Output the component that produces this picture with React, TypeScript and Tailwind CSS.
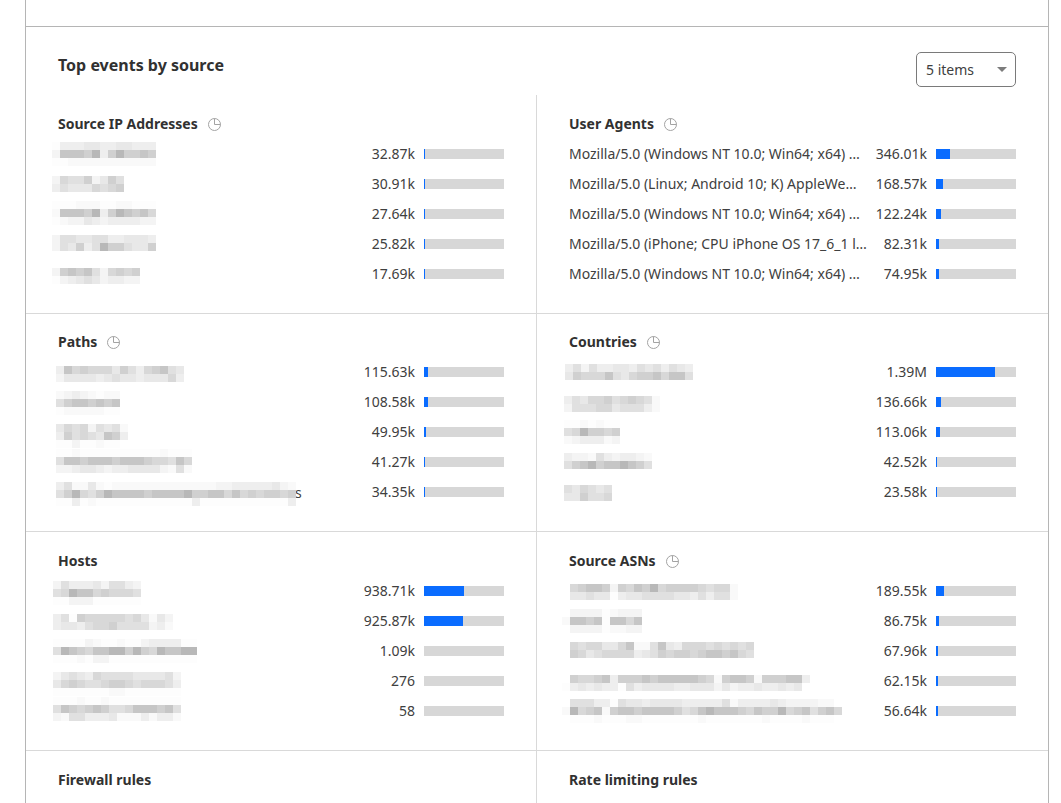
const shades: Record<string, string> = {
  "0": "#fdfdfd", "1": "#f9f9f9", "2": "#f4f4f4", "3": "#eeeeee", "4": "#e8e8e8",
  "5": "#e0e0e0", "6": "#d8d8d8", "7": "#d0d0d0", "8": "#c6c6c6", "9": "#b8b8b8",
};

type Blur = { x: number; y: number; rows: string[]; tail?: boolean };
type Item = { label?: string; blur?: Blur; value: string; fill: number };
type Sec = { title: string; pie?: boolean; top: string; items: Item[] };

function Mosaic({ x, y, rows, tail }: Blur) {
  const w = Math.max(...rows.map((r) => r.length)) * 8;
  return (
    <div className="relative h-full">
      {tail && <span className="absolute left-[237px] top-[1px] text-sm leading-5 text-[#404040]">s</span>}
      <svg
        width={w}
        height={rows.length * 8}
        className="relative block overflow-visible"
        style={{ marginLeft: x, marginTop: y }}
      >
        {rows.flatMap((r, ri) =>
          r.split("").map((c, ci) =>
            c === "." ? null : (
              <rect key={`${ri}-${ci}`} x={ci * 8} y={ri * 8} width={8} height={8} fill={shades[c]} />
            ),
          ),
        )}
      </svg>
    </div>
  );
}

function Pie() {
  return (
    <svg width="13" height="13" viewBox="0 0 13 13" fill="none" stroke="#a3a3a3" strokeWidth="1" className="ml-[10px] shrink-0">
      <circle cx="6.5" cy="6.5" r="6" />
      <path d="M6.5 .5v6h6" />
    </svg>
  );
}

function Row({ item }: { item: Item }) {
  return (
    <div className="flex h-[30px] items-center">
      <div className="h-full w-[299px] shrink-0">
        {item.blur ? (
          <Mosaic {...item.blur} />
        ) : (
          <div className="text-sm leading-[30px] whitespace-nowrap text-[#404040]">{item.label}</div>
        )}
      </div>
      <div className="flex-1 text-right text-sm leading-[30px] text-[#404040]">{item.value}</div>
      <div className="ml-[9px] h-2.5 w-20 shrink-0 bg-[#d7d7d7]">
        <div className="h-full bg-[#0a6cff]" style={{ width: item.fill }} />
      </div>
    </div>
  );
}

function Section({ sec }: { sec: Sec }) {
  return (
    <section className={`min-w-0 px-8 ${sec.top}`}>
      <h3 className="mb-[5px] flex h-5 items-center text-sm font-bold text-[#313131]">
        {sec.title}
        {sec.pie && <Pie />}
      </h3>
      {sec.items.map((item, i) => (
        <Row key={i} item={item} />
      ))}
    </section>
  );
}

const ua1 = "Mozilla/5.0 (Windows NT 10.0; Win64; x64) …";

const ips: Sec = {
  title: "Source IP Addresses", pie: true, top: "pt-[19px]",
  items: [
    { value: "32.87k", fill: 1, blur: { x: -6, y: 3, rows: ["0333443344333", "2888793797787", "0011111111111"] } },
    { value: "30.91k", fill: 1, blur: { x: -6, y: 7, rows: ["265572475", "354446567"] } },
    { value: "27.64k", fill: 1, blur: { x: -6, y: 2, rows: ["0001110011000", "1888793798786", "0122432333322"] } },
    { value: "25.82k", fill: 1, blur: { x: -6, y: 6, rows: ["2554455334443", "2547359775447"] } },
    { value: "17.69k", fill: 1, blur: { x: -6, y: 9, rows: ["27878526767", "02345423322"] } },
  ],
};
const agents: Sec = {
  title: "User Agents", pie: true, top: "pt-[19px]",
  items: [
    { value: "346.01k", fill: 14, label: ua1 },
    { value: "168.57k", fill: 7, label: "Mozilla/5.0 (Linux; Android 10; K) AppleWe…" },
    { value: "122.24k", fill: 5, label: ua1 },
    { value: "82.31k", fill: 3, label: "Mozilla/5.0 (iPhone; CPU iPhone OS 17_6_1 l…" },
    { value: "74.95k", fill: 3, label: ua1 },
  ],
};
const paths: Sec = {
  title: "Paths", pie: true, top: "pt-[18px]",
  items: [
    { value: "115.63k", fill: 4, blur: { x: -2, y: 9, rows: ["3867666475367854", "2444434544344463"] } },
    { value: "108.58k", fill: 4, blur: { x: -2, y: 4, rows: ["12321011", "57887878", "01111100"] } },
    { value: "49.95k", fill: 2, blur: { x: -2, y: 7, rows: ["465625451", "375654873", "00200100"] } },
    { value: "41.27k", fill: 1, blur: { x: -2, y: 2, rows: ["00100000000001000", "58878887888766586", "22344323344442151"] } },
    { value: "34.35k", fill: 1, blur: { x: -2, y: 5, tail: true, rows: ["351141011111111111112233333421", "579657988887888897788686767767", "003010000000000003000000000003"] } },
  ],
};
const countries: Sec = {
  title: "Countries", pie: true, top: "pt-[18px]",
  items: [
    { value: "1.39M", fill: 59, blur: { x: -4, y: 7, rows: ["3525334435453543", "4766685467786885"] } },
    { value: "136.66k", fill: 5, blur: { x: -5, y: 9, rows: ["354667567651", "255566455531"] } },
    { value: "113.06k", fill: 4, blur: { x: -5, y: 3, rows: ["0010100", "5697767", "1233312"] } },
    { value: "42.52k", fill: 1, blur: { x: -5, y: 6, rows: ["32215323321", "57897889875"] } },
    { value: "23.58k", fill: 1, blur: { x: -5, y: 8, rows: ["546545", "447556"] } },
  ],
};
const hosts: Sec = {
  title: "Hosts", pie: false, top: "pt-[19px]",
  items: [
    { value: "938.71k", fill: 40, blur: { x: -5, y: 5, rows: ["25333425532", "56988676665", "00222000000"] } },
    { value: "925.87k", fill: 39, blur: { x: -5, y: 8, rows: ["350766666564142", "344356675555231"] } },
    { value: "1.09k", fill: 0, blur: { x: -5, y: 3, rows: ["000021001002333300", "598768899797698899", "000102200000000000"] } },
    { value: "276", fill: 0, blur: { x: -5, y: 6, rows: ["2454365555444452", "4676556776566653", "0000000110000000"] } },
    { value: "58", fill: 0, blur: { x: -5, y: 1, rows: ["0001001000000000", "5876787556888785", "2155333411131331"] } },
  ],
};
const asns: Sec = {
  title: "Source ASNs", pie: true, top: "pt-[19px]",
  items: [
    { value: "189.55k", fill: 8, blur: { x: -7, y: 8, rows: [".678872768796777765661", ".445440344555544353551"] } },
    { value: "86.75k", fill: 3, blur: { x: -7, y: 3, rows: [".222201222", "1887808868", ".222201122"] } },
    { value: "67.96k", fill: 2, blur: { x: -7, y: 6, rows: [".65664468115843666565656", ".76456666345767767887865"] } },
    { value: "62.15k", fill: 2, blur: { x: -7, y: 9, rows: [".766783777878888876178871777883", "034343305344443344424233433434"] } },
    { value: "56.64k", fill: 2, blur: { x: -7, y: 3, rows: [".555330544344443333351333343222211", "19678178878888756898887687796785786", ".000100011000000010000000100001000"] } },
  ],
};

export default function App() {
  return (
    <div className="h-[803px] overflow-hidden bg-white pl-[25px] font-['Noto_Sans',sans-serif]">
      <div className="h-[803px] w-[1024px] border-x border-[#b5b5b5]">
        <div className="h-[27px] border-b border-[#b5b5b5]" />
        <div className="flex h-[68px] items-start justify-between px-8 pt-[25px]">
          <h2 className="mt-[2px] text-base leading-[22px] font-bold text-[#313131]">Top events by source</h2>
          <div className="flex h-[35px] w-[100px] items-center justify-between rounded-[5px] border border-[#7a7a7a] pr-2 pl-[9px] text-sm text-[#404040]">
            <span>5 items</span>
            <svg width="10" height="5" viewBox="0 0 10 5" className="block">
              <path d="M0 0h10L5 5z" fill="#7c7c7c" />
            </svg>
          </div>
        </div>
        <div className="grid grid-cols-2 grid-rows-[219px_218px_219px_60px]">
          <div className="border-r border-b border-[#d9d9d9]"><Section sec={ips} /></div>
          <div className="border-b border-[#d9d9d9]"><Section sec={agents} /></div>
          <div className="border-r border-b border-[#d9d9d9]"><Section sec={paths} /></div>
          <div className="border-b border-[#d9d9d9]"><Section sec={countries} /></div>
          <div className="border-r border-b border-[#d9d9d9]"><Section sec={hosts} /></div>
          <div className="border-b border-[#d9d9d9]"><Section sec={asns} /></div>
          <div className="border-r border-[#d9d9d9]"><Section sec={{ title: "Firewall rules", top: "pt-[19px]", items: [] }} /></div>
          <div><Section sec={{ title: "Rate limiting rules", top: "pt-[19px]", items: [] }} /></div>
        </div>
      </div>
    </div>
  );
}
